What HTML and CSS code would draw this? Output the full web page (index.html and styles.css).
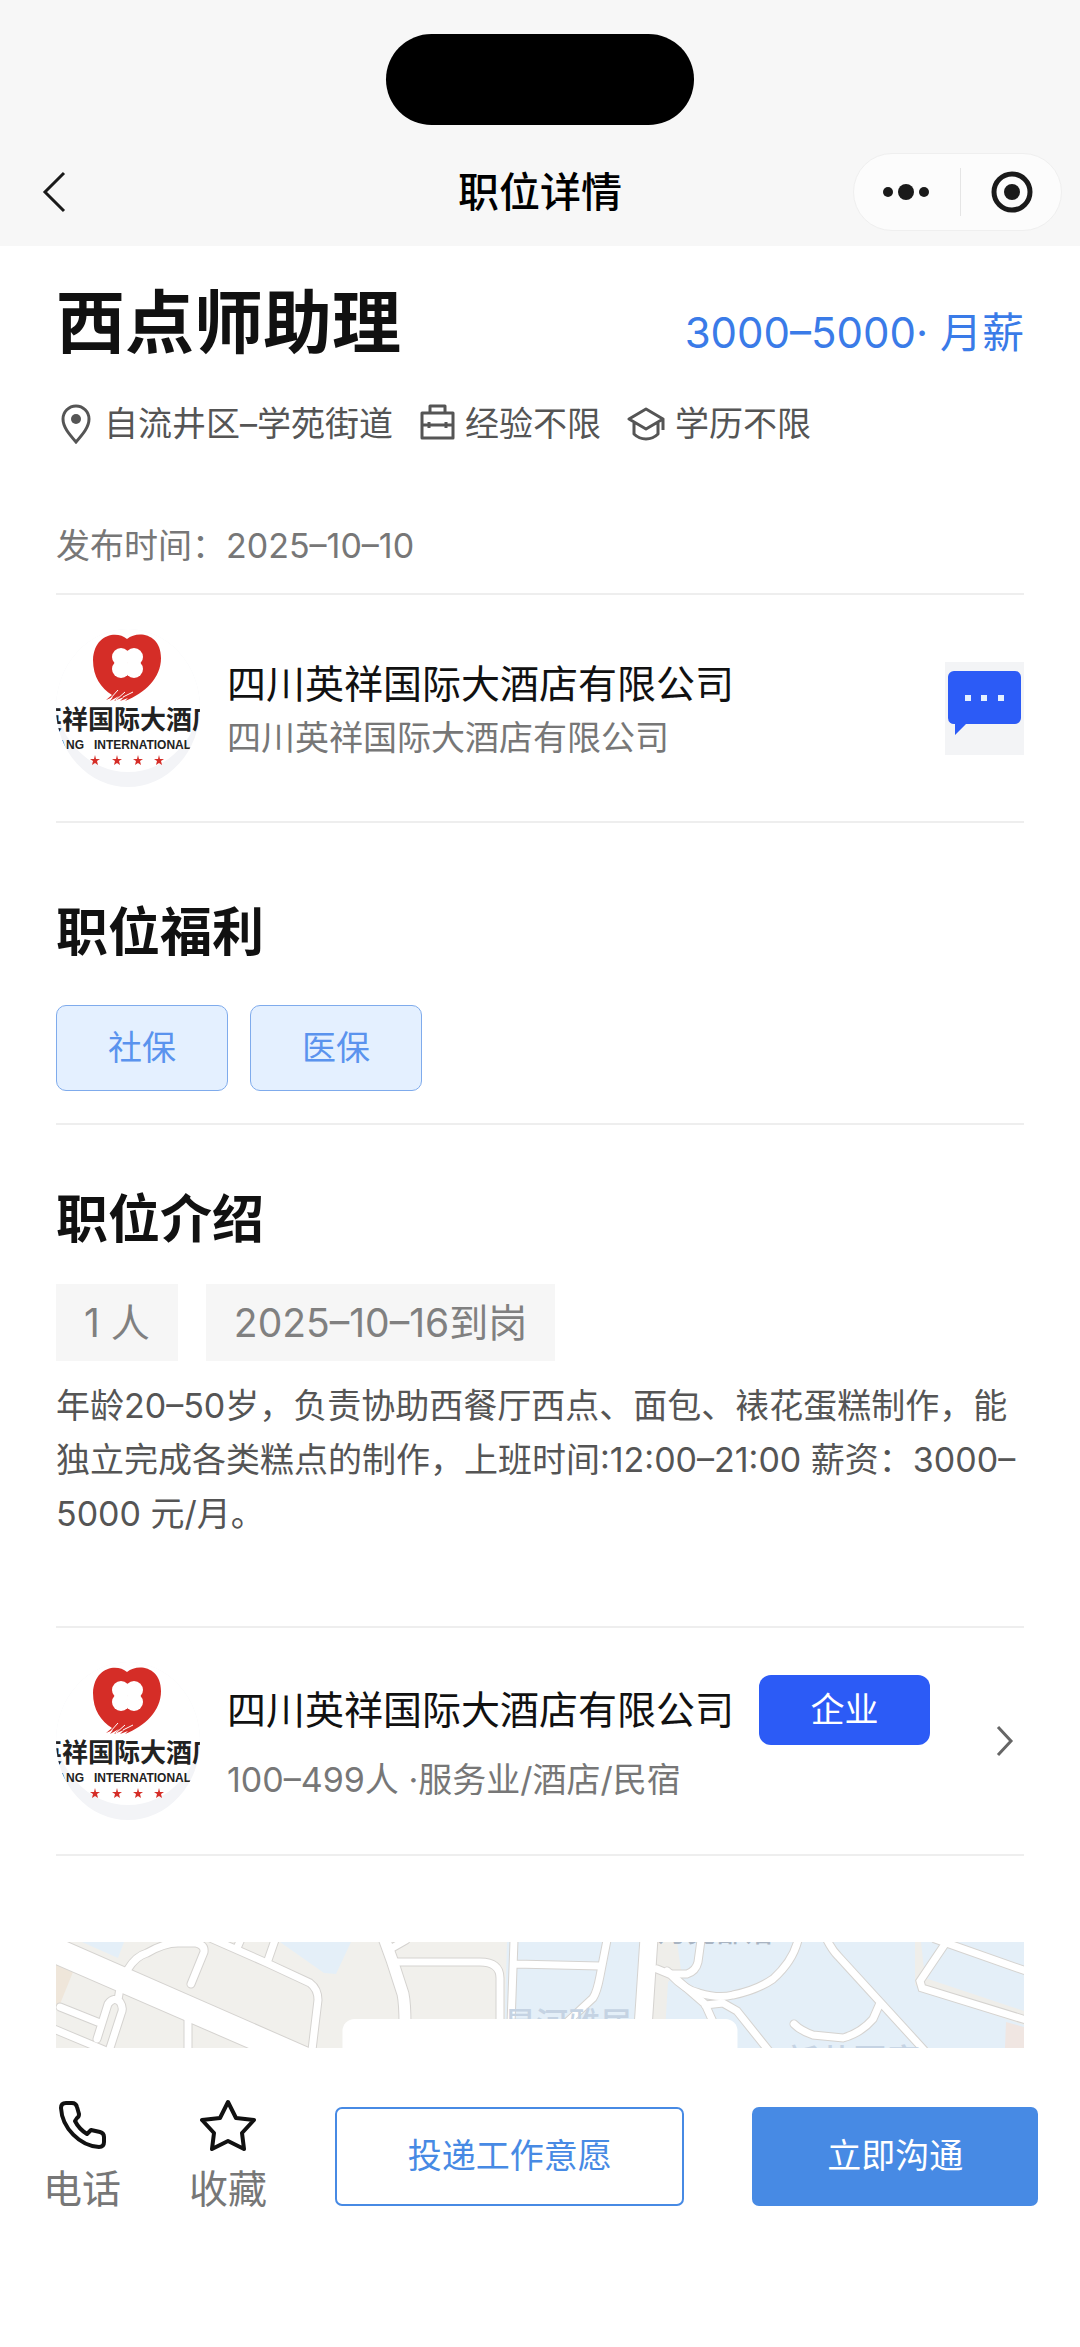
FILE: index.html
```html
<!DOCTYPE html>
<html lang="zh-CN">
<head>
    <meta charset="UTF-8">
    <meta name="viewport" content="width=device-width, initial-scale=1.0">
    <title>职位详情</title>
    <link rel="stylesheet" href="styles.css">
</head>
<body>
    <!-- Shared company logo -->
    <svg class="symbols" aria-hidden="true">
        <symbol id="logo" viewBox="0 0 144 158">
            <clipPath id="logo-clip"><ellipse cx="72" cy="79" rx="72" ry="79"/></clipPath>
            <g clip-path="url(#logo-clip)">
                <rect width="144" height="158" fill="#f3f4f7"/>
                <ellipse cx="72" cy="64" rx="73" ry="79" fill="#fff"/>
                <path fill="#d52d27" d="M71 10C61 1 38 5 37 31c0 17 8 28 19 35l-6 5 7-3-3 4 9-5-5 5 10-4-4 4 8-3-3 3c20-8 36-23 36-43C105 5 82 1 71 10z"/>
                <path stroke="#fff" stroke-width="1" d="M54 70l8-9M60 71l9-8M67 68l10-5"/>
                <g fill="#fff">
                    <circle cx="65" cy="28" r="9"/>
                    <circle cx="78" cy="28" r="9"/>
                    <circle cx="65" cy="40" r="9"/>
                    <circle cx="78" cy="40" r="9"/>
                </g>
                <text class="logo-name" x="71" y="100" text-anchor="middle">英祥国际大酒店</text>
                <text class="logo-sub" x="28" y="120" text-anchor="end">XIANG</text>
                <text class="logo-sub" x="38" y="120">INTERNATIONAL</text>
                <g fill="#d52d27">
                    <path d="M39 126l1 4h4l-3 2 1 4-3-2-3 2 1-4-3-2h4z"/>
                    <path d="M61 126l1 4h4l-3 2 1 4-3-2-3 2 1-4-3-2h4z"/>
                    <path d="M82 126l1 4h4l-3 2 1 4-3-2-3 2 1-4-3-2h4z"/>
                    <path d="M103 126l1 4h4l-3 2 1 4-3-2-3 2 1-4-3-2h4z"/>
                </g>
            </g>
        </symbol>
    </svg>

    <header class="header">
        <div class="island"></div>
        <div class="nav">
            <button class="back" aria-label="返回">
                <svg width="24" height="42" viewBox="0 0 24 42" fill="none" stroke="#1a1a1a" stroke-width="3"><path d="M22 2L3 21l19 19"/></svg>
            </button>
            <h1 class="nav-title">职位详情</h1>
            <div class="capsule">
                <button aria-label="更多">
                    <svg width="48" height="18" viewBox="0 0 48 18" fill="#1a1a1a"><circle cx="6" cy="9" r="5"/><circle cx="24" cy="9" r="8"/><circle cx="42" cy="9" r="5"/></svg>
                </button>
                <span class="capsule-line"></span>
                <button aria-label="关闭">
                    <svg width="42" height="42" viewBox="0 0 42 42"><circle cx="21" cy="21" r="18" fill="none" stroke="#1a1a1a" stroke-width="5"/><circle cx="21" cy="21" r="8" fill="#1a1a1a"/></svg>
                </button>
            </div>
        </div>
    </header>

    <main class="content">
        <!-- Job summary -->
        <section class="summary">
            <div class="title-row">
                <h2 class="job-title">西点师助理</h2>
                <span class="salary">3000–5000· 月薪</span>
            </div>
            <div class="info-row">
                <span class="info">
                    <svg width="38" height="40" viewBox="0 0 38 40" fill="none" stroke="#555" stroke-width="3"><path d="M20 38C13 30 7 23 7 15a13 13 0 0 1 26 0c0 8-6 15-13 23z"/><circle cx="20" cy="15" r="5" fill="#555" stroke="none"/></svg>
                    自流井区–学苑街道
                </span>
                <span class="info">
                    <svg width="36" height="40" viewBox="0 0 36 40" fill="none" stroke="#555" stroke-width="3" stroke-linejoin="round"><path d="M3 9h31v25H3zM11 9V2h15v7M3 21h31M10 18v6M27 18v6"/></svg>
                    经验不限
                </span>
                <span class="info">
                    <svg width="38" height="40" viewBox="0 0 38 40" fill="none" stroke="#555" stroke-width="3" stroke-linejoin="round"><path d="M19 5l17 10-17 10L2 15zM7 19v11c3 3 7 5 12 5s9-2 12-5V19M36 15v11"/></svg>
                    学历不限
                </span>
            </div>
            <p class="publish">发布时间：2025–10–10</p>
        </section>

        <section class="company">
            <svg class="avatar" role="img" aria-label="英祥国际大酒店"><use href="#logo"/></svg>
            <div class="company-text">
                <h3 class="company-name">四川英祥国际大酒店有限公司</h3>
                <p class="company-sub">四川英祥国际大酒店有限公司</p>
            </div>
            <button class="chat" aria-label="聊天">
                <svg width="79" height="93" viewBox="0 0 79 93"><path fill="#2c5bf6" d="M9 9h61a6 6 0 0 1 6 6v41a6 6 0 0 1-6 6H21L10 73V62a6 6 0 0 1-7-6V15a6 6 0 0 1 6-6z"/><path fill="#e4f0ff" d="M20 33h6v6h-6zM36 33h6v6h-6zM53 33h6v6h-6z"/></svg>
            </button>
        </section>

        <section class="welfare">
            <h2 class="section-title">职位福利</h2>
            <div class="tags">
                <span class="tag">社保</span>
                <span class="tag">医保</span>
            </div>
        </section>

        <section class="intro">
            <h2 class="section-title">职位介绍</h2>
            <div class="chips">
                <span class="chip">1 人</span>
                <span class="chip">2025–10–16到岗</span>
            </div>
            <p class="desc">年龄20–50岁，负责协助西餐厅西点、面包、裱花蛋糕制作，能独立完成各类糕点的制作，上班时间:12:00–21:00 薪资：3000–5000 元/月。</p>
        </section>

        <section class="company">
            <svg class="avatar" role="img" aria-label="英祥国际大酒店"><use href="#logo"/></svg>
            <div class="company-info">
                <div class="name-row">
                    <h3 class="company-name">四川英祥国际大酒店有限公司</h3>
                    <span class="badge">企业</span>
                </div>
                <p class="company-sub">100–499人 ·服务业/酒店/民宿</p>
            </div>
            <a class="more" href="#" aria-label="公司详情">
                <svg width="18" height="32" viewBox="0 0 18 32" fill="none" stroke="#666" stroke-width="3"><path d="M2 2l13 14L2 30"/></svg>
            </a>
        </section>

        <!-- Map -->
        <div class="map">
            <svg class="map-img" viewBox="0 0 968 106" preserveAspectRatio="xMidYMin slice">
                <defs>
                    <g id="roads">
                        <path d="M72 27Q80 14 91 11Q108 1 122 1h18q9 2 8 9L135 42"/>
                        <path d="M154-4l57 25 43 20q8 6 8 17l-6 50M219-2l-8 23M185-3l-4 9"/>
                        <path d="M336 6l14-8M341 20h83q20 0 20 16v50M458-2l-3 84M459 22l85 2"/>
                        <path d="M64 46l-2 12M41 97L52 62q6-8 12-2 4 6 1 12L54 106M4 65l40 16M-2 87l50 21M132 78v30"/>
                        <path d="M551-2l-7 36q-3 16-7 22L509 82"/>
                        <path d="M601 27l12 5h18q9-3 11-12l3-22M614 32q15 16 29 19 20 6 34 2 24-5 40-16 20-18 25-39"/>
                        <path d="M611 29l38 33 9 20M649 63l18-2 14 8 32 40"/>
                        <path d="M770-4q6 12 12 18l86 94M824 61l-7 16q-12 14-30 19l-30-3q-12-4-19-11"/>
                        <path d="M889 2l-25 37 2 7 104 32M879-3l91 32"/>
                    </g>
                    <path id="road-mid" d="M328-4l8 22 11 34q2 10 2 30"/>
                    <path id="road-wide" d="M593-4l-6 90"/>
                    <path id="road-main" d="M-5-7L262 110h-60L-5 20z"/>
                </defs>
                <rect width="968" height="106" fill="#f1f0ec"/>
                <path fill="#e4eff8" d="M26 0h42l-6 16zM224 0h71l-15 32-12-1zM451 0h517v106H448z"/>
                <path fill="#efe6da" d="M0 22l17 8L4 62H0z"/>
                <path fill="#efeeea" d="M600 0h21l4 28-13 12-4 66h-20zM859 0h6l4 36 99 33v14l-101-34-8-6z"/>
                <path fill="#f0e6e2" d="M950 80l18 5v21h-19z"/>

                <!-- road outlines first, white fill on top -->
                <g fill="none" stroke="#d5d3d0" stroke-linecap="round">
                    <use href="#roads" stroke-width="9"/>
                    <use href="#road-mid" stroke-width="13"/>
                    <use href="#road-wide" stroke-width="19"/>
                    <use href="#road-main" stroke-width="2"/>
                </g>
                <g fill="none" stroke="#fff" stroke-linecap="round">
                    <use href="#roads" stroke-width="7"/>
                    <use href="#road-mid" stroke-width="11"/>
                    <use href="#road-wide" stroke-width="17"/>
                    <use href="#road-main" fill="#fff" stroke="none"/>
                </g>
                <g class="map-label">
                    <text x="602" y="0" font-size="29" fill="#a9b4c2">月亮部落</text>
                    <text x="448" y="93" font-size="32">星河雅居</text>
                    <text x="729" y="132" font-size="34">新苑国富</text>
                </g>
            </svg>
            <div class="callout">自贡英祥国际大酒店</div>
        </div>
    </main>

    <footer class="footer">
        <button class="action">
            <svg width="56" height="54" viewBox="0 0 56 54" fill="none" stroke="#111" stroke-width="4" stroke-linejoin="round"><path d="M12 5h6q4 0 5 4l2 7q0 3-2 4l-2 3q4 8 12 13l4-4 9 2q4 1 4 5v5q0 5-5 5C26 48 8 30 7 10q0-5 5-5z"/></svg>
            <span>电话</span>
        </button>
        <button class="action">
            <svg width="56" height="54" viewBox="0 0 56 54" fill="none" stroke="#111" stroke-width="4" stroke-linejoin="round"><path d="M28 4l8 16 18 2-12 13 2 16-16-8-16 8 2-16L2 22l18-2z"/></svg>
            <span>收藏</span>
        </button>
        <button class="btn btn-outline">投递工作意愿</button>
        <button class="btn btn-solid">立即沟通</button>
    </footer>
</body>
</html>
```
FILE: styles.css
```css
* {
    box-sizing: border-box;
}
body {
    font-family: Inter, "Noto Sans CJK SC", sans-serif;
    font-size: 34px;
    line-height: 54px;
    color: #111;
    background-color: #fff;
    margin: 0;
    min-height: 100vh;
}
h1, h2, h3, p {
    margin: 0;
}
button {
    font-family: inherit;
    border: none;
    background: none;
    padding: 0;
    cursor: pointer;
}
svg {
    display: block;
    flex-shrink: 0;
}
.symbols {
    position: absolute;
    width: 0;
    height: 0;
}

/* Header */
.header {
    background-color: #f7f7f7;
    padding: 34px 18px 15px;
}
.island {
    width: 308px;
    height: 91px;
    margin: 0 auto 28px;
    border-radius: 46px;
    background-color: #000;
}
.nav {
    display: grid;
    grid-template-columns: 1fr auto 1fr;
    align-items: center;
}
.back {
    justify-self: start;
    margin-left: 24px;
}
.nav-title {
    font-size: 41px;
    font-weight: 500;
    color: #000;
}
.capsule {
    justify-self: end;
    display: flex;
    align-items: center;
    justify-content: space-between;
    width: 209px;
    height: 78px;
    padding: 0 28px;
    border: 1px solid #efefef;
    border-radius: 39px;
    background-color: #fcfcfc;
}
.capsule-line {
    width: 1px;
    height: 48px;
    background-color: #e5e5e5;
}

/* Content */
.content {
    padding: 0 56px;
}
.content section {
    border-bottom: 2px solid #eee;
}
.summary {
    padding: 37px 0 27px;
}
.title-row {
    display: flex;
    justify-content: space-between;
    align-items: baseline;
}
.job-title {
    font-size: 69px;
    font-weight: 700;
    line-height: 80px;
}
.salary {
    font-size: 42px;
    color: #3a7be8;
}
.info-row {
    display: flex;
    gap: 26px;
    margin: 41px 0 82px;
    color: #555;
    line-height: 40px;
}
.info {
    display: flex;
    gap: 10px;
}
.publish {
    line-height: 40px;
    color: #777;
}
.company {
    display: flex;
    align-items: center;
    padding: 34px 0;
}
.avatar {
    width: 144px;
    height: 158px;
    margin-right: 27px;
}
.logo-name {
    font-size: 26px;
    font-weight: 700;
    fill: #222;
}
.logo-sub {
    font-family: "Liberation Sans", sans-serif;
    font-size: 12px;
    font-weight: 700;
    fill: #222;
}
.company-text {
    flex: 1;
    padding-top: 6px;
}
.company-name {
    font-size: 39px;
    font-weight: 400;
}
.company-sub {
    color: #777;
}
.company-info {
    flex: 1;
}
.name-row {
    display: flex;
    align-items: center;
    gap: 25px;
    margin-bottom: 8px;
}
.badge {
    width: 171px;
    line-height: 70px;
    border-radius: 12px;
    background-color: #2c5bf6;
    color: #fff;
    text-align: center;
}
.chat {
    background-color: #f3f4f6;
}
.more {
    margin-right: 10px;
}
.section-title {
    font-size: 52px;
    font-weight: 700;
    line-height: 72px;
}
.welfare {
    padding: 74px 0 32px;
}
.tags {
    display: flex;
    gap: 22px;
    margin-top: 36px;
}
.tag {
    width: 172px;
    line-height: 84px;
    border: 1px solid #7fabec;
    border-radius: 10px;
    background-color: #e4f0ff;
    color: #5a93ee;
    text-align: center;
}
.intro {
    padding: 59px 0 85px;
}
.chips {
    display: flex;
    gap: 28px;
    margin: 28px 0 18px;
}
.chip {
    padding: 0 28px;
    background-color: #f6f6f6;
    color: #808080;
    font-size: 39px;
    line-height: 77px;
}
.desc {
    color: #555;
}

/* Map */
.map {
    position: relative;
    height: 106px;
    margin-top: 86px;
    overflow: hidden;
}
.map-img {
    width: 100%;
    height: 100%;
}
.map-label {
    font-weight: 500;
    fill: #c5d3e3;
}
.callout {
    position: absolute;
    top: 77px;
    left: 50%;
    transform: translateX(-50%);
    padding: 21px 22px;
    border-radius: 12px;
    background-color: #fff;
    font-size: 39px;
    white-space: nowrap;
}

/* Bottom bar */
.footer {
    display: flex;
    align-items: center;
    gap: 68px;
    padding: 50px 42px 130px 43px;
    background-color: #fff;
}
.action {
    display: flex;
    flex-direction: column;
    align-items: center;
    gap: 11px;
    color: #777;
    font-size: 39px;
    line-height: 52px;
}
.btn {
    height: 99px;
    border-radius: 7px;
    font-size: 34px;
    padding-bottom: 6px;
}
.btn-outline {
    flex: 347;
    border: 2px solid #478ae4;
    color: #478ae4;
}
.btn-solid {
    flex: 287;
    background-color: #478ae4;
    color: #fff;
}
```
